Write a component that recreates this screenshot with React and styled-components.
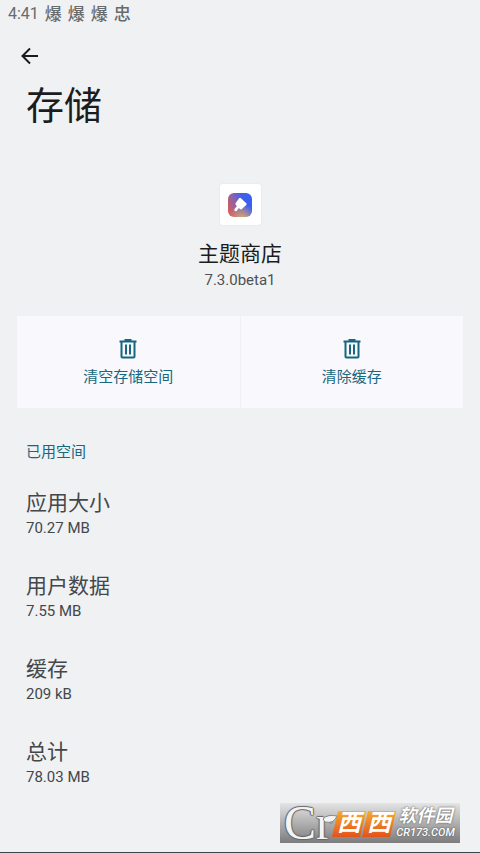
import styled, { createGlobalStyle } from 'styled-components';

const items = [
    { label: '应用大小', value: '70.27 MB' },
    { label: '用户数据', value: '7.55 MB' },
    { label: '缓存', value: '209 kB' },
    { label: '总计', value: '78.03 MB' },
];

const TrashIcon = () => (
    <svg width='18' height='20' viewBox='0 0 18 20' fill='none' stroke='currentColor' aria-hidden='true'>
        <path d='M0.5 2.5h17M5.5 1h7' strokeWidth='2' />
        <path d='M2.5 2v15.5q0 1 1 1h11q1 0 1-1V2' strokeWidth='2' />
        <path d='M7 5.5v10M11 5.5v10' strokeWidth='2' />
    </svg>
);

const App = () => (
    <Page>
        <GlobalStyle />
        <StatusBar>
            <time>4:41</time>
            <span>爆</span>
            <span>爆</span>
            <span>爆</span>
            <span>忠</span>
        </StatusBar>
        <BackButton type='button' aria-label='返回'>
            <svg width='18' height='18' viewBox='0 0 18 18' fill='none' stroke='currentColor' strokeWidth='2'>
                <path d='M17 9H2M9 1.5L1.5 9L9 16.5' />
            </svg>
        </BackButton>
        <Title>存储</Title>
        <AppHeader>
            <AppIcon>
                <Logo>
                    <svg width='18' height='18' viewBox='0 0 16 16' fill='#fff' aria-hidden='true'>
                        <path d='M7.2 1.9Q8 1.2 8.8 1.9L13.6 6.5Q14.3 7.2 13.6 7.9L9.4 11.7Q8.7 12.3 8 11.6L7 10.7L5.2 13Q4.2 14 3.2 13.1Q2.5 12.2 3.3 11.3L5.2 9L4.3 8Q3.7 7.3 4 6.5Z' />
                    </svg>
                </Logo>
            </AppIcon>
            <AppName>主题商店</AppName>
            <Version>7.3.0beta1</Version>
        </AppHeader>
        <Actions>
            <ActionButton type='button'>
                <TrashIcon />
                清空存储空间
            </ActionButton>
            <ActionButton type='button'>
                <TrashIcon />
                清除缓存
            </ActionButton>
        </Actions>
        <SectionTitle>已用空间</SectionTitle>
        <Usage>
            {items.map(({ label, value }) => (
                <div key={label}>
                    <dt>{label}</dt>
                    <dd>{value}</dd>
                </div>
            ))}
        </Usage>
        <Watermark>
            <Monogram>
                Cr
                <svg width='16' height='10' viewBox='0 0 16 10' aria-hidden='true'>
                    <path d='M1 5Q5 0 15 2Q12 10 3 8Z' fill='#f4f4f4' stroke='#888' />
                </svg>
            </Monogram>
            <Tiles>
                <Tile>西</Tile>
                <Tile>西</Tile>
            </Tiles>
            <Site>
                <strong>软件园</strong>
                <small>CR173.COM</small>
            </Site>
        </Watermark>
    </Page>
);

export default App;

const GlobalStyle = createGlobalStyle`
    * {
        box-sizing: border-box;
        margin: 0;
    }
    body {
        background: #eff1f3;
        color: #1a1c1e;
        font-family: Roboto, 'Noto Sans CJK SC', sans-serif;
    }
    button {
        border: 0;
        font: inherit;
        cursor: pointer;
    }
`;

const Page = styled.main`
    position: relative;
    display: flex;
    flex-direction: column;
    min-height: 100vh;
    border-bottom: 1px solid #3c4650;
`;

const StatusBar = styled.header`
    display: flex;
    align-items: center;
    column-gap: 6px;
    height: 28px;
    padding-left: 8px;
    color: #686a6c;
    font-size: 16px;
    line-height: 28px;
    span {
        font-size: 17px;
        font-weight: 500;
    }
`;

const BackButton = styled.button`
    align-self: flex-start;
    display: flex;
    margin: 19px 0 0 12px;
    padding: 0 9px;
    background: none;
    color: #1a1c1e;
`;

const Title = styled.h1`
    padding: 13px 26px 0;
    font-size: 38px;
    font-weight: 400;
    line-height: 56px;
`;

const AppHeader = styled.section`
    display: flex;
    flex-direction: column;
    align-items: center;
    padding-top: 50px;
`;

const AppIcon = styled.div`
    display: grid;
    place-items: center;
    width: 41px;
    height: 41px;
    border-radius: 3px;
    background: #fff;
    box-shadow: 0 0 2px #dfe1e5;
`;

const Logo = styled.div`
    display: grid;
    place-items: center;
    width: 24px;
    height: 24px;
    border-radius: 6px;
    background:
        radial-gradient(circle at 60% 110%, #d9b06f, transparent 50%),
        linear-gradient(65deg, #ee5a44, #8762ae 42%, #3d5ff0 68%);
`;

const AppName = styled.h2`
    margin-top: 13px;
    font-size: 21px;
    font-weight: 400;
    line-height: 32px;
`;

const Version = styled.p`
    color: #505254;
    font-size: 15px;
    line-height: 20px;
`;

const Actions = styled.div`
    display: grid;
    grid-template-columns: 1fr 1fr;
    column-gap: 1px;
    margin: 26px 17px 0;
`;

const ActionButton = styled.button`
    display: flex;
    flex-direction: column;
    align-items: center;
    row-gap: 6px;
    height: 92px;
    padding: 23px 0 0;
    background: #f9f9fd;
    color: #176780;
    font-size: 15px;
    line-height: 24px;
`;

const SectionTitle = styled.h3`
    padding: 32px 26px 0;
    color: #176780;
    font-size: 15px;
    font-weight: 400;
    line-height: 24px;
`;

const Usage = styled.dl`
    display: grid;
    row-gap: 32px;
    padding: 23px 26px 0;
    color: #44474a;
    dt {
        font-size: 21px;
        line-height: 32px;
    }
    dd {
        font-size: 15px;
        line-height: 19px;
    }
`;

const Watermark = styled.aside`
    position: absolute;
    right: 20px;
    bottom: 9px;
    display: flex;
    align-items: center;
    width: 180px;
    height: 40px;
    padding: 0 5px 0 4px;
    background: linear-gradient(#e4e4e4, #7c7c7c);
    color: #fff;
`;

const Monogram = styled.span`
    position: relative;
    z-index: 1;
    flex-shrink: 0;
    width: 48px;
    color: #f4f4f4;
    font-family: 'Liberation Serif', serif;
    font-size: 48px;
    line-height: 40px;
    text-shadow: 1px 0 1px #666, -1px 0 1px #666, 0 1px 1px #666, 0 -1px 1px #666;
    svg {
        position: absolute;
        top: 11px;
        right: -6px;
    }
`;

const Tiles = styled.div`
    display: flex;
    margin-top: 2px;
`;

const Tile = styled.b`
    width: 34px;
    height: 26px;
    margin-right: -4px;
    background: linear-gradient(#f6ab2e, #e3531b);
    clip-path: polygon(6px 0, 100% 0, 28px 100%, 0 100%);
    font-size: 24px;
    font-style: italic;
    line-height: 25px;
    text-align: center;
`;

const Site = styled.div`
    display: grid;
    flex: 1;
    justify-items: center;
    padding-left: 4px;
    font-style: italic;
    text-shadow: 0 0 2px #444;
    white-space: nowrap;
    strong {
        font-size: 18px;
        line-height: 20px;
    }
    small {
        font-size: 11px;
        font-weight: 500;
        line-height: 14px;
    }
`;
